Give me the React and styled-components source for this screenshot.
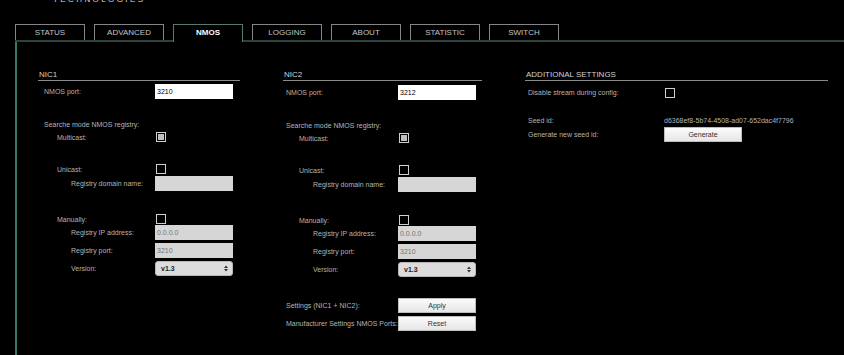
import React from 'react';
import styled, { createGlobalStyle } from 'styled-components';

const Global = createGlobalStyle`
  html, body { margin: 0; padding: 0; background: #000; }
  body { font-family: "Liberation Sans", Arial, sans-serif; width: 844px; height: 355px; overflow: hidden; }
  * { box-sizing: border-box; }
`;

const Page = styled.div`
  width: 844px;
  height: 355px;
  background: #000;
  display: flex;
  flex-direction: column;
  overflow: hidden;
`;

const Brand = styled.div`
  height: 5px;
  overflow: hidden;
  padding-left: 53px;
`;

const BrandText = styled.div`
  margin-top: -5px;
  font-size: 8px;
  line-height: 9px;
  letter-spacing: 2.4px;
  color: #d8d8d8;
`;

const TabBar = styled.nav`
  margin-top: 19px;
  margin-left: 15px;
  height: 18px;
  display: flex;
  align-items: flex-start;
  gap: 9px;
  border-bottom: 2px solid #2c423b;
`;

const Tab = styled.div`
  width: 70px;
  height: ${p => (p.$active ? 18 : 16)}px;
  border: 1px solid ${p => (p.$active ? '#567a6e' : '#858585')};
  border-bottom: none;
  background: #000;
  display: flex;
  align-items: center;
  justify-content: center;
  padding-bottom: ${p => (p.$active ? 2 : 0)}px;
  font-size: 8px;
  font-weight: ${p => (p.$active ? 700 : 400)};
  color: ${p => (p.$active ? '#ffffff' : '#c4c4c4')};
  position: relative;
  z-index: ${p => (p.$active ? 1 : 0)};
`;

const Panel = styled.main`
  flex: 1;
  margin-left: 15px;
  border-left: 2px solid #367a6c;
  padding: 28px 0 0 21px;
  display: flex;
  align-items: flex-start;
  gap: 43px;
`;

const Column = styled.section`
  width: ${p => p.$w}px;
  display: flex;
  flex-direction: column;
`;

const Heading = styled.h3`
  margin: 0;
  height: 11px;
  line-height: 10px;
  padding-left: 1px;
  font-size: 8px;
  font-weight: 400;
  color: #d2d2d2;
  border-bottom: 1px solid #8a8a8a;
`;

const Row = styled.div`
  display: flex;
  align-items: center;
  height: ${p => p.$h}px;
  margin-top: ${p => p.$mt}px;
`;

const Label = styled.span`
  flex: none;
  width: ${p => p.$w}px;
  padding-left: ${p => p.$indent}px;
  font-size: 7px;
  color: #b4b4b4;
  white-space: nowrap;
`;

const Text = styled.span`
  font-size: 7px;
  color: #b4b4b4;
  white-space: nowrap;
`;

const Input = styled.input`
  width: 78px;
  height: 15px;
  border: none;
  outline: none;
  margin: 0;
  padding: 0 2px;
  font-family: "Liberation Sans", Arial, sans-serif;
  font-size: 7px;
  color: #000;
  background: #fff;
  &:disabled { background: #d6d6d6; color: #8c8c8c; }
`;

const Box = styled.span`
  width: 10px;
  height: 10px;
  margin-left: 1px;
  border: 1px solid #cfcfcf;
  padding: 1px;
  display: inline-flex;
`;

const Fill = styled.span`
  flex: 1;
  background: #bdbdbd;
`;

const SelectBox = styled.div`
  width: 78px;
  height: 15px;
  border-radius: 3px;
  border: 1px solid #b8b8b8;
  background: #dcdcdc;
  display: flex;
  align-items: center;
  justify-content: space-between;
  padding: 0 4px 0 5px;
  font-size: 7px;
  font-weight: 700;
  color: #222;
`;

const Button = styled.button`
  width: 78px;
  height: 15px;
  margin: 0;
  padding: 0;
  border: 1px solid #bdbdbd;
  background: linear-gradient(#fbfbfb, #e6e6e6);
  font-family: "Liberation Sans", Arial, sans-serif;
  font-size: 7px;
  color: #333;
`;

const Checkbox = ({ checked }) => (
  <Box>{checked ? <Fill /> : null}</Box>
);

const Arrows = () => (
  <svg width="4" height="7" viewBox="0 0 4 7">
    <path d="M0 3 L2 0.5 L4 3 Z M0 4 L2 6.5 L4 4 Z" fill="#333" />
  </svg>
);

const NicColumn = ({ title, port, w, lw, base, shift }) => {
  const F = ({ indent = 0, h = 15, mt = 0, label, children }) => (
    <Row $h={h} $mt={mt}>
      <Label $w={lw} $indent={base + indent}>{label}</Label>
      {children}
    </Row>
  );
  return (
    <Column $w={w}>
      <Heading>{title}</Heading>
      <F mt={3 + shift} label="NMOS port:"><Input defaultValue={port} /></F>
      <F mt={20} h={10} label="Searche mode NMOS registry:" />
      <F mt={2} h={12} indent={13} label="Multicast:"><Checkbox checked /></F>
      <F mt={20} h={12} indent={13} label="Unicast:"><Checkbox /></F>
      <F mt={1} indent={27} label="Registry domain name:"><Input disabled /></F>
      <F mt={22} h={12} indent={13} label="Manually:"><Checkbox /></F>
      <F mt={0} indent={27} label="Registry IP address:"><Input disabled placeholder="0.0.0.0" /></F>
      <F mt={3} indent={27} label="Registry port:"><Input disabled placeholder="3210" /></F>
      <F mt={3} indent={27} label="Version:"><SelectBox><span>v1.3</span><Arrows /></SelectBox></F>
      {title === 'NIC2' && (
        <>
          <F mt={21} label="Settings (NIC1 + NIC2):"><Button>Apply</Button></F>
          <F mt={3} label="Manufacturer Settings NMOS Ports:"><Button>Reset</Button></F>
        </>
      )}
    </Column>
  );
};

const tabs = ['STATUS', 'ADVANCED', 'NMOS', 'LOGGING', 'ABOUT', 'STATISTIC', 'SWITCH'];

export default function App() {
  return (
    <Page>
      <Global />
      <Brand><BrandText>TECHNOLOGIES</BrandText></Brand>
      <TabBar>
        {tabs.map(t => <Tab key={t} $active={t === 'NMOS'}>{t}</Tab>)}
      </TabBar>
      <Panel>
        <NicColumn title="NIC1" port="3210" w={202} lw={117} base={6} shift={0} />
        <NicColumn title="NIC2" port="3212" w={199} lw={115} base={3} shift={1} />
        <Column $w={303}>
          <Heading>ADDITIONAL SETTINGS</Heading>
          <Row $h={13} $mt={5}>
            <Label $w={139} $indent={3}>Disable stream during config:</Label>
            <Checkbox />
          </Row>
          <Row $h={12} $mt={15}>
            <Label $w={139} $indent={3}>Seed id:</Label>
            <Text>d6368ef8-5b74-4508-ad07-652dac4f7796</Text>
          </Row>
          <Row $h={15} $mt={1}>
            <Label $w={139} $indent={3}>Generate new seed id:</Label>
            <Button>Generate</Button>
          </Row>
        </Column>
      </Panel>
    </Page>
  );
}
